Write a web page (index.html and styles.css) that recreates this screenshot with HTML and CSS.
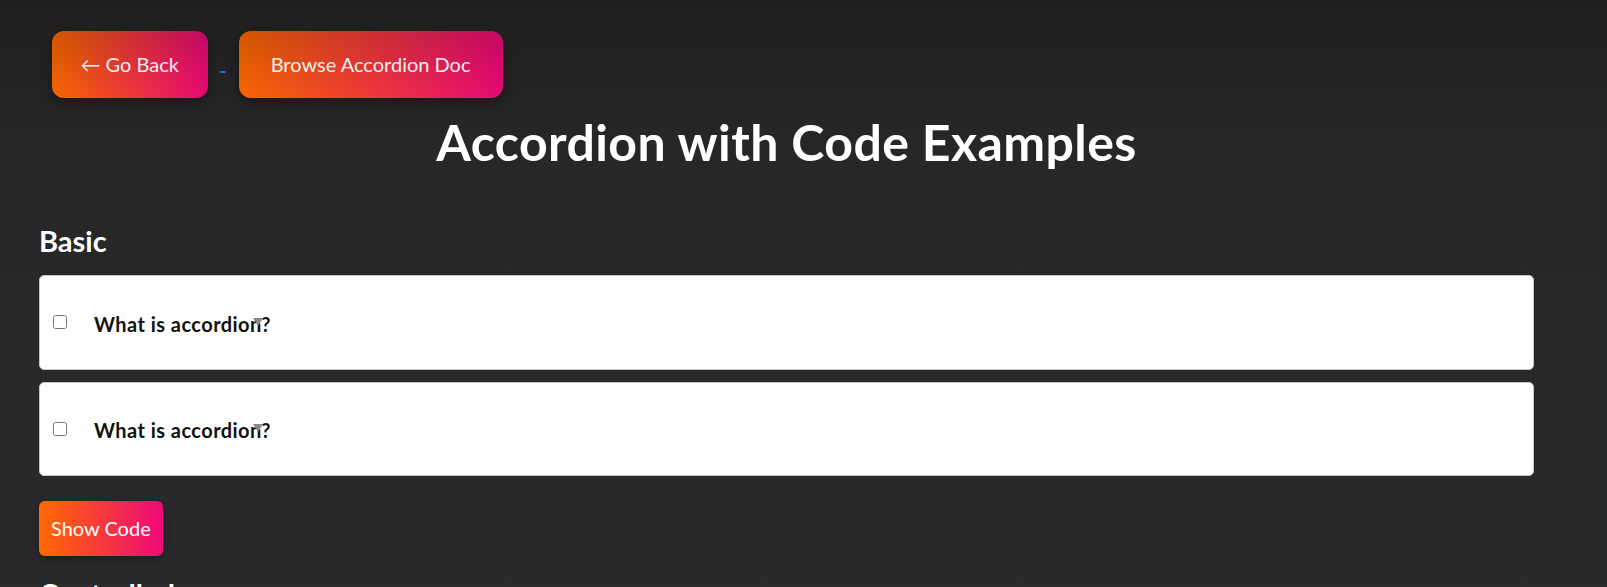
FILE: index.html
```html
<!DOCTYPE html>
<html lang="en">
<head>
<meta charset="utf-8">
<title>Accordion with Code Examples</title>
<link rel="stylesheet" href="styles.css">
</head>
<body>
<div class="page">
  <nav class="nav"><a class="nav-link" href="#"><button class="btn btn-nav btn-back">← Go Back</button> </a><a class="nav-link" href="#"><button class="btn btn-nav">Browse Accordion Doc</button></a></nav>
  <h1 class="title">Accordion with Code Examples</h1>
  <section class="example">
    <h2 class="example-title">Basic</h2>
    <div class="accordion">
      <div class="acc-item">
        <input type="checkbox" class="acc-toggle" id="basic-1">
        <label class="acc-label" for="basic-1">What is accordion?</label>
      </div>
      <div class="acc-item">
        <input type="checkbox" class="acc-toggle" id="basic-2">
        <label class="acc-label" for="basic-2">What is accordion?</label>
      </div>
    </div>
    <button class="btn btn-code">Show Code</button>
  </section>
  <section class="example">
    <h2 class="example-title">Controlled</h2>
  </section>
</div>
</body>
</html>
```
FILE: styles.css
```css
html, body {
  margin: 0;
  padding: 0;
}

body {
  background: linear-gradient(to bottom, #1f1f1f 0, #27272a 150px, #2a2a2d 587px) no-repeat;
  background-color: #2a2a2d;
  font-family: Lato, "Open Sans", sans-serif;
  color: #ffffff;
  min-height: 587px;
  overflow: hidden;
}

.page {
  width: 1495px;
  padding-left: 39px;
}

.nav {
  padding-top: 31px;
  font-size: 20px;
  line-height: 24px;
}

.nav-link {
  color: #1766e0;
  text-decoration: underline;
  text-decoration-thickness: 2px;
  text-underline-offset: -1px;
  word-spacing: 1px;
}

.btn {
  font-family: Lato, "Open Sans", sans-serif;
  font-size: 20px;
  line-height: 27px;
  border: none;
  cursor: pointer;
  color: #ffffff;
}

.btn-nav {
  margin: 0 12px 0 13px;
  padding: 20px 32px;
  border-radius: 12px;
  color: #f1eef0;
  word-spacing: normal;
  background:
    linear-gradient(to bottom, rgba(0, 0, 0, 0.18), rgba(0, 0, 0, 0.03)),
    linear-gradient(to right, #ff6a00, #ee0979);
  box-shadow: 0 4px 12px rgba(0, 0, 0, 0.35);
}

.btn-back {
  padding-left: 28.5px;
  padding-right: 28.5px;
}

.title {
  margin: 14px 0 51px;
  font-size: 50px;
  line-height: 60px;
  font-weight: 700;
  letter-spacing: 0.4px;
  text-align: center;
  color: #ffffff;
}

.example {
  margin-bottom: 20px;
}

.example-title {
  margin: 0 0 17px;
  font-size: 29px;
  line-height: 35px;
  font-weight: 700;
  color: #ffffff;
}

.accordion {
  display: flex;
  flex-direction: column;
  gap: 12px;
}

.acc-item {
  box-sizing: border-box;
  height: 94.5px;
  display: flex;
  align-items: center;
  padding-left: 13px;
  background: #ffffff;
  border: 1px solid #c4c4c4;
  border-radius: 5px;
}

.acc-toggle {
  width: 14px;
  height: 14px;
  margin: 0;
}

.acc-label {
  position: relative;
  margin-left: 27px;
  padding-top: 3px;
  font-size: 20px;
  line-height: 24px;
  font-weight: 700;
  letter-spacing: 0.45px;
  color: #111111;
}

.acc-label::after {
  content: "";
  position: absolute;
  left: 159px;
  top: 9px;
  width: 0;
  height: 0;
  border-left: 5px solid transparent;
  border-right: 5px solid transparent;
  border-top: 8px solid #8a8a8a;
}

.btn-code {
  display: block;
  margin-top: 25px;
  padding: 14px 12px;
  border-radius: 6px;
  background: linear-gradient(to right, #ff6a00, #ee0979);
  box-shadow: 0 3px 10px rgba(0, 0, 0, 0.35);
}
```
